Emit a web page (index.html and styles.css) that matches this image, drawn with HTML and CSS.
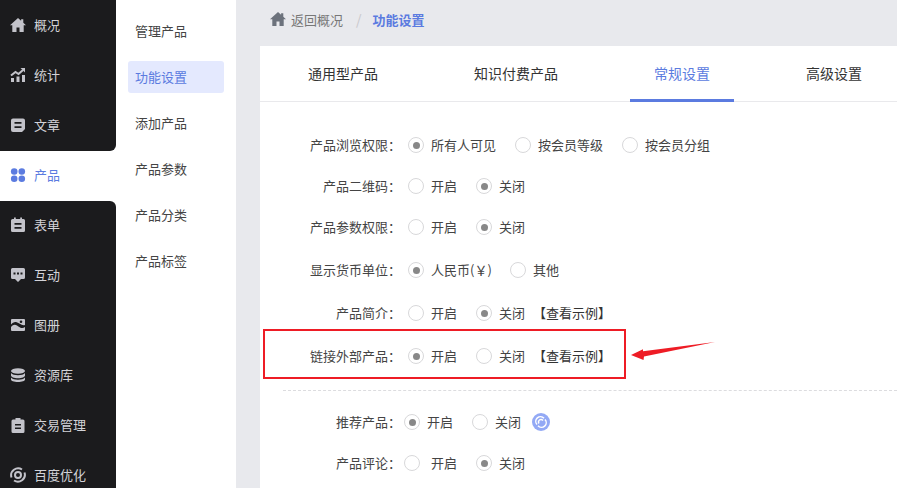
FILE: index.html
```html
<!DOCTYPE html>
<html lang="zh-CN">
<head>
<meta charset="utf-8">
<title>功能设置</title>
<link rel="stylesheet" href="styles.css">
</head>
<body>
<div class="app">
  <nav class="side">
    <div class="side-group side-top">
      <a class="nav"><svg class="ico" viewBox="0 0 16 16"><path d="M8 1 0 8.300h2.300V15h4.200v-4.500h3V15h4.200V8.300H16l-2.700-2.500V2.200h-2.200v1.600z"/></svg>概况</a>
      <a class="nav"><svg class="ico" viewBox="0 0 16 16"><path d="M1 11h3v4H1zM6.500 9.500h3V15h-3zM12 8h3v7h-3z"/><path d="M1 8.500 5.500 5l3 2L13 3" fill="none" stroke-width="2" stroke="#c3c3ca"/><path d="M10.500 1H15v4.500z"/></svg>统计</a>
      <a class="nav"><svg class="ico" viewBox="0 0 16 16"><path fill-rule="evenodd" d="M3 1.500h10a2 2 0 0 1 2 2v8.500l-3 3H3a2 2 0 0 1-2-2v-9.500a2 2 0 0 1 2-2zM4.500 5v1.800h7V5zM4.500 9.300v1.800h7V9.300z"/></svg>文章</a>
    </div>
    <a class="nav nav-active"><svg class="ico" viewBox="0 0 16 16"><circle cx="4.200" cy="4.500" r="3.300"/><circle cx="11.800" cy="4.500" r="3.300"/><circle cx="4.200" cy="11.800" r="3.300"/><circle cx="11.800" cy="11.800" r="3.300"/></svg>产品</a>
    <div class="side-group side-bottom">
      <a class="nav"><svg class="ico" viewBox="0 0 16 16"><path fill-rule="evenodd" d="M4 .5h1.800V2h4.400V.5H12V2h1.500A1.500 1.500 0 0 1 15 3.500v10a1.500 1.500 0 0 1-1.500 1.500h-11A1.500 1.500 0 0 1 1 13.500v-10A1.500 1.500 0 0 1 2.500 2H4zM4.500 6v1.700h7V6zM4.500 10v1.700h7V10z"/></svg>表单</a>
      <a class="nav"><svg class="ico" viewBox="0 0 16 16"><path fill-rule="evenodd" d="M1 2.500a1.500 1.500 0 0 1 1.500-1.500h11A1.500 1.500 0 0 1 15 2.500v8a1.500 1.500 0 0 1-1.500 1.500H11l-3 3-3-3H2.500A1.500 1.500 0 0 1 1 10.500zM3.500 5.500v2h2v-2zM7 5.500v2h2v-2zM10.500 5.500v2h2v-2z"/></svg>互动</a>
      <a class="nav"><svg class="ico" viewBox="0 0 16 16"><path d="M2 2h12a1 1 0 0 1 1 1v5C12 9.500 9 5.500 6 5 4 4.700 2.500 5.700 1 7.500V3a1 1 0 0 1 1-1zM1 10c2-2.500 4-3 6-1.500 3 2.500 5.500 3.500 8 1.500v3a1 1 0 0 1-1 1H2a1 1 0 0 1-1-1z"/><circle cx="11" cy="4.700" r="1.300" fill="#1b1b1d"/></svg>图册</a>
      <a class="nav"><svg class="ico" viewBox="0 0 16 16"><ellipse cx="8" cy="4" rx="7" ry="2.800"/><path d="M1 6c1 1.500 4 2.200 7 2.200S14 7.500 15 6v2.500c0 1.500-3 2.700-7 2.700s-7-1.200-7-2.700z"/><path d="M1 10.500c1 1.500 4 2.200 7 2.200s6-.7 7-2.200V12.500c0 1.500-3 2.500-7 2.500s-7-1-7-2.500z"/></svg>资源库</a>
      <a class="nav"><svg class="ico" viewBox="0 0 16 16"><path fill-rule="evenodd" d="M5.500 1h5v1.500H13a1.500 1.500 0 0 1 1.500 1.500v10.500A1.500 1.500 0 0 1 13 16H3a1.500 1.500 0 0 1-1.500-1.500V4A1.500 1.500 0 0 1 3 2.500h2.500zM5 7v1.600h6V7zM5 10.500v1.600h6v-1.600z"/></svg>交易管理</a>
      <a class="nav"><svg class="ico" viewBox="0 0 16 16"><path fill="none" stroke="#c3c3ca" stroke-width="2" d="M1.500 10.500A7 7 0 0 1 12 2.500M14.500 5.500A7 7 0 0 1 4 13.500"/><circle cx="8" cy="8" r="3" fill="none" stroke="#c3c3ca" stroke-width="2"/></svg>百度优化</a>
    </div>
  </nav>

  <aside class="sub">
    <a class="sub-item">管理产品</a>
    <a class="sub-item sub-active">功能设置</a>
    <a class="sub-item">添加产品</a>
    <a class="sub-item">产品参数</a>
    <a class="sub-item">产品分类</a>
    <a class="sub-item">产品标签</a>
  </aside>

  <main class="main">
    <div class="crumb">
      <svg class="crumb-ico" viewBox="0 0 16 16"><path d="M8 1 0 8.300h2.300V15h4.200v-4.500h3V15h4.200V8.300H16l-2.700-2.500V2.200h-2.200v1.600z"/></svg>
      <span class="crumb-back">返回概况</span>
      <span class="crumb-sep">/</span>
      <span class="crumb-cur">功能设置</span>
    </div>
    <section class="card">
      <div class="tabs">
        <a class="tab">通用型产品</a>
        <a class="tab">知识付费产品</a>
        <a class="tab tab-active">常规设置</a>
        <a class="tab">高级设置</a>
      </div>
      <form class="form">
        <div class="row row-first">
          <span class="label">产品浏览权限：</span>
          <span class="radio on r-a"></span><span class="opt w-84">所有人可见</span>
          <span class="radio"></span><span class="opt w-84">按会员等级</span>
          <span class="radio"></span><span class="opt">按会员分组</span>
        </div>
        <div class="row row-tight">
          <span class="label">产品二维码：</span>
          <span class="radio r-a"></span><span class="opt w-45">开启</span>
          <span class="radio on"></span><span class="opt">关闭</span>
        </div>
        <div class="row row-tight">
          <span class="label">产品参数权限：</span>
          <span class="radio r-a"></span><span class="opt w-45">开启</span>
          <span class="radio on"></span><span class="opt">关闭</span>
        </div>
        <div class="row">
          <span class="label">显示货币单位：</span>
          <span class="radio on r-a"></span><span class="opt w-79">人民币(￥)</span>
          <span class="radio"></span><span class="opt">其他</span>
        </div>
        <div class="row">
          <span class="label">产品简介：</span>
          <span class="radio r-a"></span><span class="opt w-45">开启</span>
          <span class="radio on"></span><span class="opt">关闭</span>
          <a class="example">【查看示例】</a>
        </div>
        <div class="row">
          <span class="label">链接外部产品：</span>
          <span class="radio on r-a"></span><span class="opt w-45">开启</span>
          <span class="radio"></span><span class="opt">关闭</span>
          <a class="example">【查看示例】</a>
        </div>
        <div class="divider"></div>
        <div class="row row-after">
          <span class="label">推荐产品：</span>
          <span class="radio on r-b"></span><span class="opt w-45">开启</span>
          <span class="radio"></span><span class="opt">关闭</span>
          <svg class="link-ico" viewBox="0 0 18 18"><circle cx="9" cy="9" r="9" fill="#93a9f5"/><path d="M5 11.500A4.500 4.500 0 0 1 12 5.200M13 6.500A4.500 4.500 0 0 1 6 12.800M7 10.500a2.200 2.200 0 0 1 4-3" fill="none" stroke="#fff" stroke-width="1.500"/></svg>
        </div>
        <div class="row row-tight">
          <span class="label">产品评论：</span>
          <span class="radio r-b"></span><span class="opt-wide">开启</span>
          <span class="radio on"></span><span class="opt">关闭</span>
        </div>
      </form>
    </section>
  </main>

  <div class="redbox"></div>
  <svg class="arrow" viewBox="0 0 87 20"><path d="M1 14 13 8.300 13 10.300 85 1 14 15.500 13.500 19z" fill="#ee1c25"/></svg>
</div>
</body>
</html>
```
FILE: styles.css
```css
* { box-sizing: border-box; }
html, body { margin: 0; height: 100%; overflow: hidden; }
body { font-family: "Noto Sans CJK SC", "Noto Sans", sans-serif; font-size: 13px; color: #333; background: #e8e9ed; }
a { color: inherit; text-decoration: none; }

.app { position: relative; display: flex; width: 897px; height: 488px; overflow: hidden; }

.side { flex: 0 0 116px; height: 488px; background: #fff; display: flex; flex-direction: column; }
.side-group { background: #1b1b1d; color: #d3d3d8; }
.side-top { height: 151px; padding-top: 1px; border-bottom-right-radius: 6px; }
.side-bottom { flex: 1; min-height: 0; border-top-right-radius: 6px; }
.nav { display: flex; align-items: center; height: 50px; padding: 0 0 2px 10px; line-height: 20px; }
.nav-active { color: #5b7be0; background: #fff; flex: 0 0 50px; }
.ico { width: 16px; height: 16px; margin-right: 8px; fill: #c3c3ca; flex: none; }
.nav-active .ico { fill: #5b7be0; }

.sub { flex: 0 0 120px; background: #fff; padding: 15px 12px 0; display: flex; flex-direction: column; }
.sub-item { display: flex; align-items: center; height: 32px; margin-bottom: 14px; padding: 0 0 2px 7px; border-radius: 3px; color: #444; }
.sub-active { background: #e4e9fe; color: #5b7be0; }

.main { flex: 1; padding-left: 24px; min-width: 0; }
.crumb { display: flex; align-items: center; height: 46px; padding: 0 0 8px 10px; color: #777; }
.crumb-ico { width: 16px; height: 16px; fill: #6c727c; margin-right: 5px; }
.crumb-sep { color: #c8c8cc; margin: 0 11px 0 13px; font-size: 14px; }
.crumb-cur { color: #5b7be0; font-weight: 700; }

.card { background: #fff; height: 442px; }
.tabs { display: flex; gap: 48px; height: 56px; padding-left: 24px; border-bottom: 1px solid #e9e9ec; }
.tab { height: 56px; padding: 0 24px; font-size: 14px; line-height: 55px; color: #333; }
.tab-active { color: #5b7be0; border-bottom: 3px solid #5b7be0; }

.form { padding-left: 23px; }
.row { display: flex; align-items: center; height: 20px; margin-top: 23px; line-height: 20px; color: #444; white-space: nowrap; }
.row-first { margin-top: 33px; }
.row-tight { margin-top: 21px; }
.row-after { margin-top: 21px; }
.label { flex: 0 0 118px; text-align: right; }
.radio { flex: none; position: relative; width: 16px; height: 16px; border: 1px solid #d8d8da; border-radius: 50%; background: #fff; margin-right: 7px; }
.radio.on::after { content: ""; position: absolute; left: 3.500px; top: 3.500px; width: 7px; height: 7px; border-radius: 50%; background: #888; }
.r-a { margin-left: 7px; }
.r-b { margin-left: 3px; }
.w-45 { width: 45px; }
.w-84 { width: 84px; }
.w-79 { width: 79px; }
.opt-wide { margin-left: 4px; width: 45px; }
.example { margin-left: 8px; color: #333; }
.link-ico { width: 18px; height: 18px; margin-left: 11px; flex: none; }
.divider { margin-top: 24px; border-top: 1px dashed #dcdcdf; }

.redbox { position: absolute; left: 263px; top: 329px; width: 363px; height: 50px; border: 2px solid #ee1c25; }
.arrow { position: absolute; left: 630px; top: 341px; width: 87px; height: 20px; }
```
